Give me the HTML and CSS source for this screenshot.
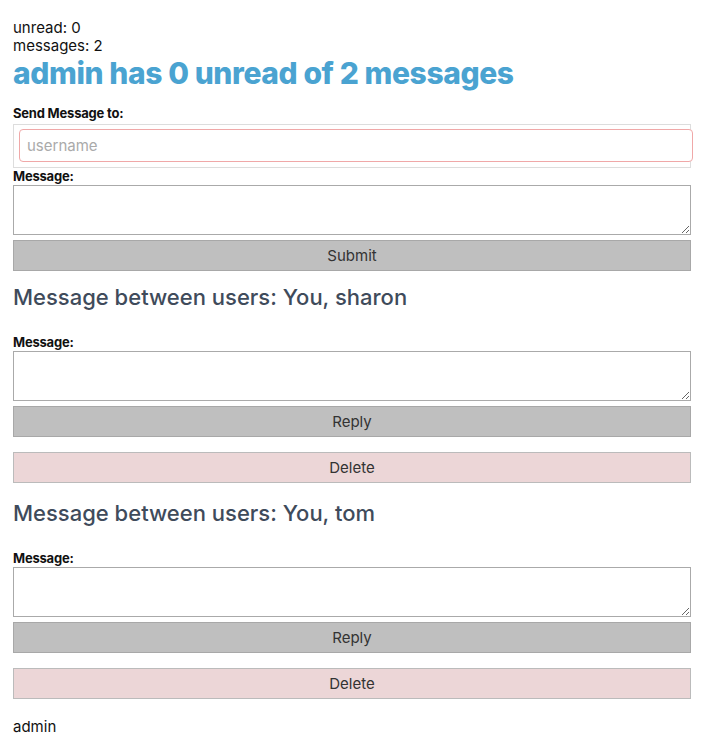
FILE: index.html
```html
<!DOCTYPE html>
<html lang="en">
<head>
    <meta charset="UTF-8">
    <meta name="viewport" content="width=device-width, initial-scale=1.0">
    <title>Messages</title>
    <link rel="stylesheet" href="styles.css">
</head>
<body>

    <div class="stats">
        <div>unread: 0</div>
        <div>messages: 2</div>
    </div>
    <h1>admin has 0 unread of 2 messages</h1>

    <!-- New message form -->
    <form class="sendForm">
        <label for="toUser">Send Message to:</label>
        <div class="toBox">
            <input type="text" id="toUser" placeholder="username">
        </div>
        <label for="newMessage">Message:</label>
        <textarea id="newMessage"></textarea>
        <button type="button" class="grayButton">Submit</button>
    </form>

    <!-- Conversations -->
    <div class="thread first">
        <h2>Message between users: You, sharon</h2>
        <form>
            <label>Message:</label>
            <textarea></textarea>
            <button type="button" class="grayButton">Reply</button>
        </form>
        <button type="button" class="deleteButton">Delete</button>
    </div>

    <div class="thread">
        <h2>Message between users: You, tom</h2>
        <form>
            <label>Message:</label>
            <textarea></textarea>
            <button type="button" class="grayButton">Reply</button>
        </form>
        <button type="button" class="deleteButton">Delete</button>
    </div>

    <footer>admin</footer>

</body>
</html>
```

FILE: styles.css
```css
/* Messages page */
body {
    font-family: Inter, "Open Sans", sans-serif;
    margin: 0;
    padding: 19px 21px 0 13px;
    background-color: #fff;
    color: #111;
}

.stats {
    font-size: 15px;
    line-height: 18px;
}

h1 {
    margin: 0 0 14px;
    font-size: 30px;
    line-height: 36px;
    font-weight: 800;
    letter-spacing: -0.4px;
    color: #4aa3d1;
}

label {
    display: block;
    font-size: 13px;
    line-height: 16px;
    font-weight: 700;
    letter-spacing: -0.2px;
}

.toBox {
    margin-top: 3px;
    padding: 4px 0 5px 5px;
    border: 1px solid #ddd;
}

.toBox input {
    display: block;
    box-sizing: border-box;
    width: calc(100% + 3px);
    height: 33px;
    padding: 0 7px;
    border: 1px solid #f0a8a8;
    border-radius: 4px;
    font-family: inherit;
    font-size: 15px;
    outline: none;
}

.toBox input::placeholder {
    color: #aaa;
}

textarea {
    display: block;
    box-sizing: border-box;
    width: 100%;
    height: 50px;
    margin-top: 1px;
    border: 1px solid #aaa;
    font-family: inherit;
}

button {
    display: block;
    box-sizing: border-box;
    width: 100%;
    height: 31px;
    font-family: inherit;
    font-size: 15px;
    color: #333;
    cursor: pointer;
}

.grayButton {
    margin-top: 5px;
    background-color: #bfbfbf;
    border: 1px solid #a8a8a8;
}

.deleteButton {
    margin-top: 15px;
    background-color: #ecd6d7;
    border: 1px solid #bbb;
}

h2 {
    margin: 16px 0 23px;
    font-size: 22px;
    line-height: 28px;
    font-weight: 500;
    color: #3f4b5b;
}

.thread.first h2 {
    margin-top: 12px;
}

footer {
    margin-top: 19px;
    font-size: 15px;
    line-height: 18px;
}
```
